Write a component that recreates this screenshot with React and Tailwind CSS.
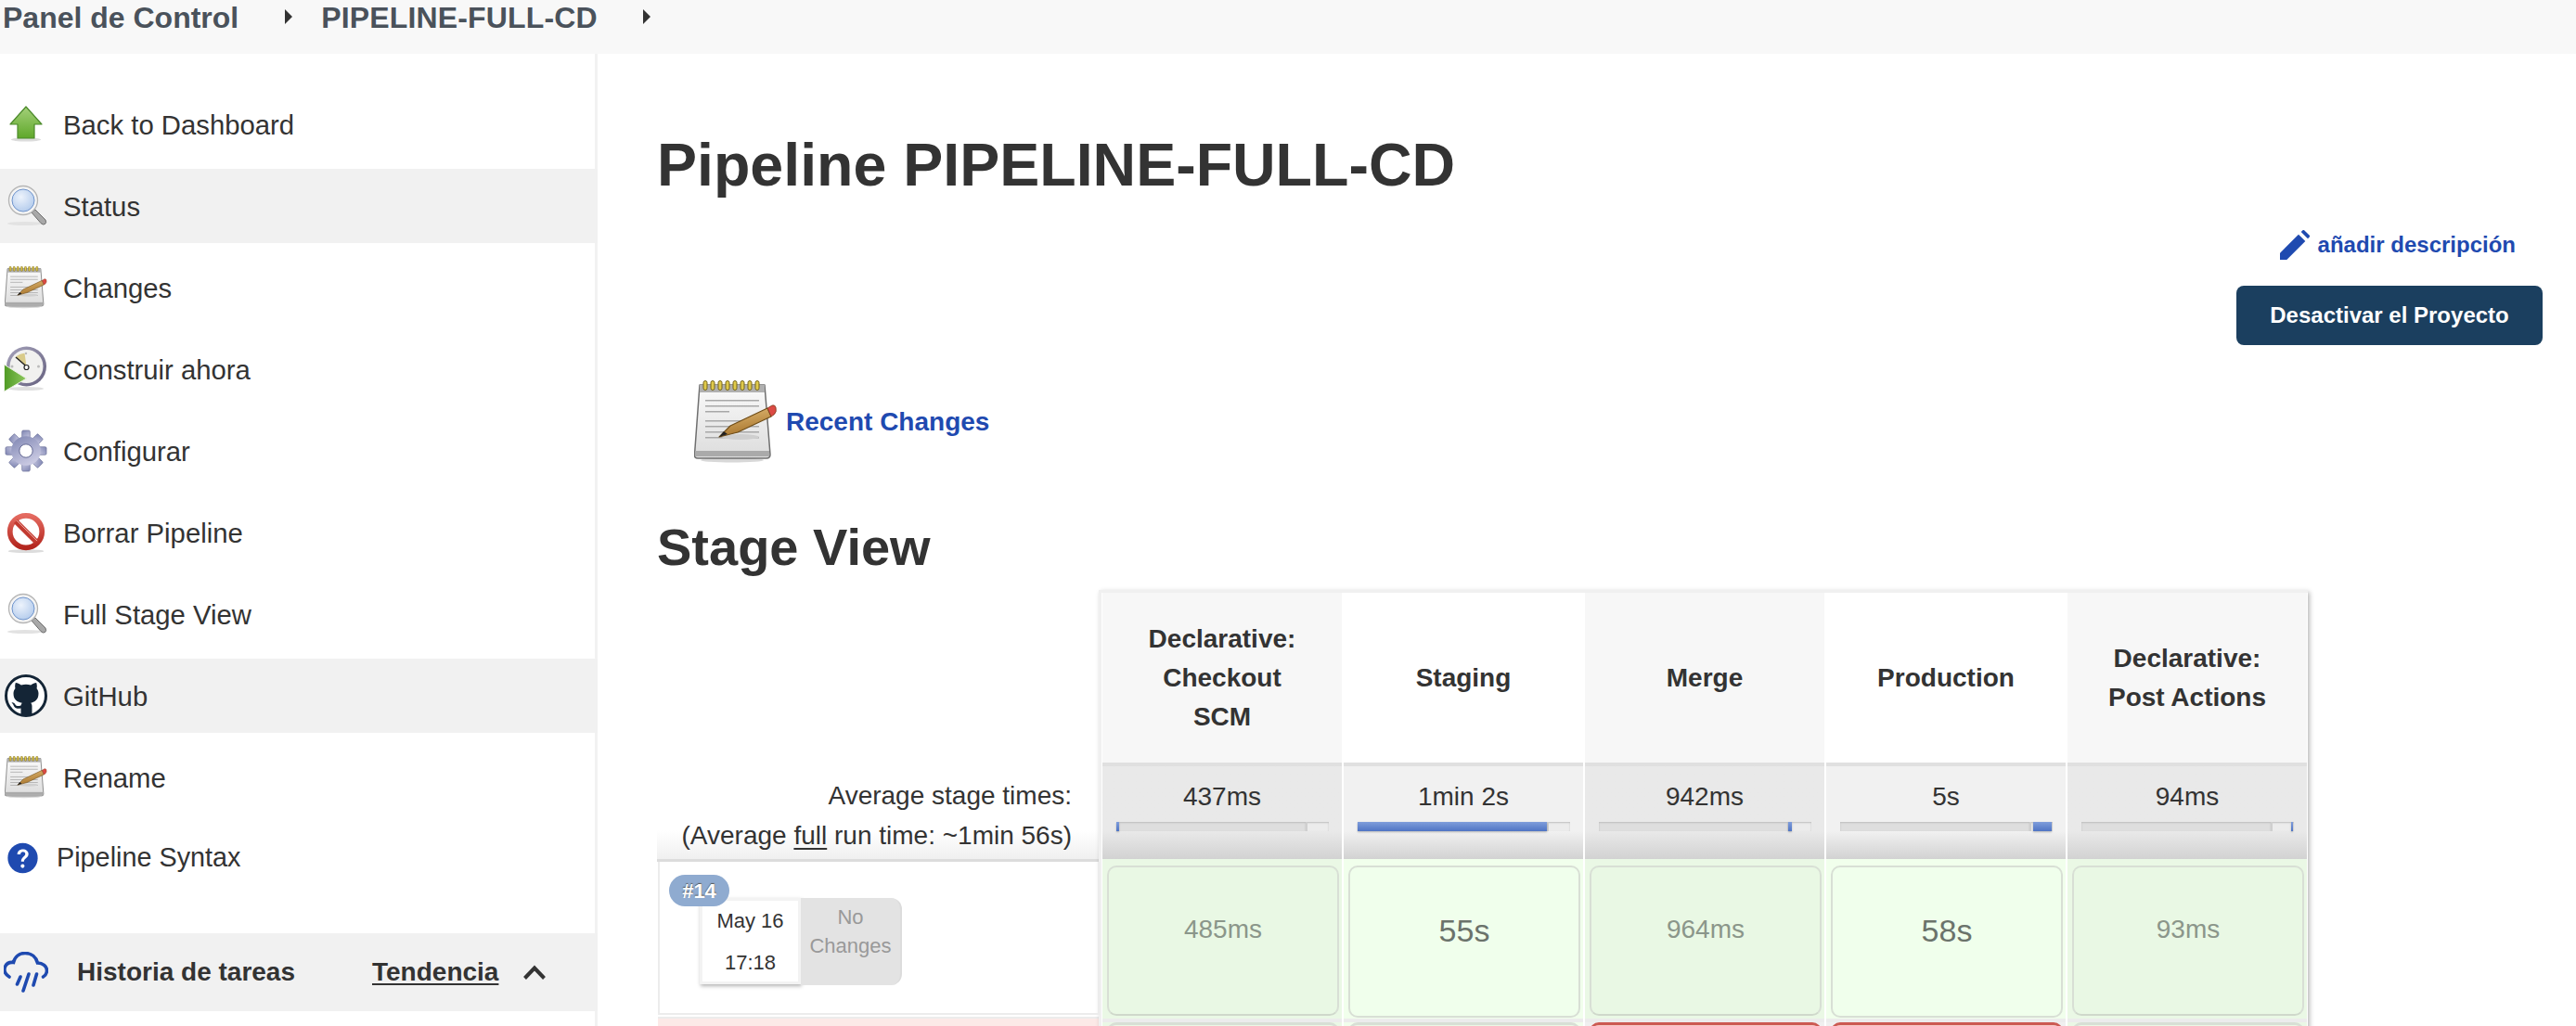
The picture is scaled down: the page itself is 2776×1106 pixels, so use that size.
import React from "react";

const F = "[font-family:'Liberation_Sans',Arial,sans-serif]";

function Notepad({ className }) {
  return (
    <svg viewBox="0 0 90 90" className={className}>
      <defs>
        <linearGradient id="npg" x1="0" y1="0" x2="0" y2="1">
          <stop offset="0" stopColor="#fafafa" />
          <stop offset="1" stopColor="#dcdcdc" />
        </linearGradient>
        <linearGradient id="pcg" x1="0" y1="0" x2="0.300" y2="1">
          <stop offset="0" stopColor="#e3bd78" />
          <stop offset="1" stopColor="#a8752d" />
        </linearGradient>
      </defs>
      <ellipse cx="41" cy="86" rx="34" ry="2.500" fill="#d8d8d8" />
      <path d="M6 5H76L82 80Q82 84 78 84H4Q0 84 0.500 80Z" fill="url(#npg)" stroke="#6f6f6f" strokeWidth="1.500" strokeLinejoin="round" />
      <rect x="6" y="5" width="70" height="8" fill="#b0b0b0" />
      <rect x="1" y="76" width="80" height="6" fill="#aaaaaa" />
      {[12, 20, 28, 36, 44, 52, 60, 68].map((x) => (
        <rect key={x} x={x - 2} y="0.500" width="4" height="10" rx="2" fill="#e0ca4a" stroke="#76651a" strokeWidth="1" />
      ))}
      {[21, 27, 33, 43, 49, 55, 61].map((y, i) => (
        <rect key={y} x="12" y={y} width={i === 2 ? 26 : 58} height="1.500" fill="#a8a8a8" />
      ))}
      <ellipse cx="50" cy="61" rx="20" ry="3" fill="#cfcfcf" />
      <path d="M27 61L39 49L79 30L83 39L47 56Z" fill="url(#pcg)" stroke="#6e4c17" strokeWidth="1.100" strokeLinejoin="round" />
      <path d="M27 61L32 55L36 58Z" fill="#222" />
      <path d="M79 30L84 27Q87 26 88 29Q89.500 34 86 37L83 39Z" fill="#dc4a44" stroke="#7c3a1a" strokeWidth="0.800" />
    </svg>
  );
}

function Magnifier({ id, className }) {
  return (
    <svg viewBox="0 0 48 48" className={className}>
      <defs>
        <radialGradient id={id} cx="0.400" cy="0.350" r="0.700">
          <stop offset="0" stopColor="#edf3fc" />
          <stop offset="1" stopColor="#b3cbec" />
        </radialGradient>
      </defs>
      <ellipse cx="23" cy="43" rx="19" ry="2" fill="#e2e2e2" />
      <path d="M30 31L34 28L45 39Q46.500 42 44.500 43.500Q42.500 45 40 42.500Z" fill="#a8a8a8" stroke="#6d6d6d" strokeWidth="1" />
      <circle cx="21" cy="18" r="15.500" fill="#f4f4f4" stroke="#b5b5b5" strokeWidth="1.300" />
      <circle cx="21" cy="18" r="12" fill={`url(#${id})`} stroke="#6f94cc" strokeWidth="1" />
    </svg>
  );
}

function Arrow({ className }) {
  return (
    <svg viewBox="0 0 48 48" className={className}>
      <defs>
        <linearGradient id="ag" x1="0" y1="0" x2="0" y2="1">
          <stop offset="0" stopColor="#a4d07a" />
          <stop offset="1" stopColor="#5fa82a" />
        </linearGradient>
      </defs>
      <ellipse cx="24" cy="40.500" rx="16" ry="2" fill="#dcdcdc" />
      <path d="M24 5L41 24H33V39H15V24H7Z" fill="url(#ag)" stroke="#4b8a2a" strokeWidth="1.200" strokeLinejoin="round" />
    </svg>
  );
}

function ClockPlay({ className }) {
  return (
    <svg viewBox="0 0 48 48" className={`${className} overflow-visible`}>
      <defs>
        <linearGradient id="pg" x1="0" y1="0" x2="1" y2="0">
          <stop offset="0" stopColor="#4f9a24" />
          <stop offset="1" stopColor="#8ec85e" />
        </linearGradient>
        <linearGradient id="cg" x1="0" y1="0" x2="1" y2="1">
          <stop offset="0" stopColor="#a6a3bb" />
          <stop offset="1" stopColor="#65607f" />
        </linearGradient>
      </defs>
      <ellipse cx="24" cy="45" rx="19" ry="2" fill="#e0e0e0" />
      <circle cx="24.500" cy="21" r="21.500" fill="url(#cg)" />
      <circle cx="24.500" cy="21" r="18" fill="#f1f1ef" />
      <path d="M24.500 21L13 11Q17 7 22.500 6.700Z" fill="#d9cb8a" />
      <path d="M24.500 21L13 11" stroke="#222" strokeWidth="1.500" />
      <circle cx="24.500" cy="22" r="2.500" fill="#fff" stroke="#222" strokeWidth="1.200" />
      <circle cx="24" cy="7" r="1.200" fill="#bbb" />
      <circle cx="37.500" cy="21" r="1.500" fill="#bbb" />
      <circle cx="9" cy="21" r="1.500" fill="#bbb" />
      <path d="M0.500 19L24.500 34L0.500 48Z" fill="url(#pg)" stroke="#e8f0df" strokeWidth="1" strokeLinejoin="round" />
    </svg>
  );
}

function Gear({ className }) {
  const teeth = [0, 45, 90, 135, 180, 225, 270, 315];
  return (
    <svg viewBox="0 0 48 48" className={className}>
      <defs>
        <linearGradient id="gg" x1="0" y1="0" x2="0.500" y2="1">
          <stop offset="0" stopColor="#7e85b2" />
          <stop offset="1" stopColor="#c9c9e2" />
        </linearGradient>
      </defs>
      <g fill="url(#gg)" stroke="#6a6f98" strokeWidth="0.700">
        {teeth.map((a) => (
          <rect key={a} x="19.500" y="1" width="9" height="12" rx="1.500" transform={`rotate(${a} 24 24)`} />
        ))}
      </g>
      <circle cx="24" cy="24" r="16.500" fill="url(#gg)" />
      <circle cx="24" cy="24" r="7.500" fill="#fff" stroke="#5f6490" strokeWidth="1" />
    </svg>
  );
}

function NoSign({ className }) {
  return (
    <svg viewBox="0 0 48 48" className={className}>
      <defs>
        <linearGradient id="ng" x1="0" y1="0" x2="0" y2="1">
          <stop offset="0" stopColor="#e46a60" />
          <stop offset="1" stopColor="#b3261e" />
        </linearGradient>
      </defs>
      <ellipse cx="24" cy="45" rx="20" ry="2" fill="#dcdcdc" />
      <circle cx="24" cy="23" r="18" fill="#fff" stroke="url(#ng)" strokeWidth="6" />
      <path d="M12.500 11.500L35.500 34.500" stroke="#c23a30" strokeWidth="6" />
      <path d="M13.500 10.500L36.500 33.500" stroke="#f3b5ae" strokeWidth="1" />
    </svg>
  );
}

function GitHubIcon({ className }) {
  return (
    <svg viewBox="0 0 48 48" className={className}>
      <circle cx="24" cy="24" r="21.500" fill="#fff" stroke="#142536" strokeWidth="3" />
      <path
        d="M18.500 44v-6.500c-5.500 1-7-1-8-3.500-.5-1.300-1.300-2-2-2.500 1.500-.5 3 .5 4 2 1 1.700 3 2 6 1 .2-1.300.7-2.200 1.300-2.800C14 30.500 10.500 28 10.500 21.500c0-2.300.8-4 2-5.500-.3-1-.7-3 .3-6 2 0 4 1 6 2.400 3.400-1 7-1 10.400 0 2-1.400 4-2.400 6-2.400 1 3 .6 5 .3 6 1.200 1.500 2 3.200 2 5.500 0 6.500-3.500 9-8.300 10.200.8.800 1.300 2 1.300 3.800V44z"
        fill="#142536"
      />
    </svg>
  );
}

function Help({ className }) {
  return (
    <svg viewBox="0 0 48 48" className={className}>
      <circle cx="24" cy="24" r="23.500" fill="#1f4ab0" />
      <path d="M15.500 18c0-5 3.800-8 8.700-8s8.800 3 8.800 7.500c0 6.500-7 6.500-7 12h-4.500c0-7.500 6.500-7.500 6.500-12 0-2-1.600-3.300-3.700-3.300s-3.800 1.500-3.800 3.800z" fill="#fff" />
      <circle cx="23.800" cy="36.500" r="3" fill="#fff" />
    </svg>
  );
}

function Rain({ className }) {
  return (
    <svg viewBox="0 0 48 44" className={className} fill="none" stroke="#1f4ab0" strokeWidth="3.600" strokeLinecap="round">
      <path d="M6 27C1 24 0 20 1.500 16C3 12.500 6 11 10.500 11.500C12 5 17 1.500 23 1.500C30 1.500 35 6 36.500 12C42 12 46.500 15.500 46.500 20C46.500 23 45 25.500 42.500 27" />
      <path d="M18 27L14.500 35M27 24L21 42M35.500 24L32 36" />
    </svg>
  );
}

function Pencil({ className }) {
  return (
    <svg viewBox="0 0 24 24" className={className} fill="#1f4ab0">
      <path d="M0 24V18.500L15 3.500L20.500 9L5.500 24Z" />
      <path d="M17 1.500L18.200 0.300A1.200 1.200 0 0 1 19.800 0.300L23.700 4.200A1.200 1.200 0 0 1 23.700 5.800L22.500 7Z" />
    </svg>
  );
}

const items = [
  { label: "Back to Dashboard", icon: <Arrow className="w-[48px] h-[48px]" />, mt: "mt-[36px]" },
  { label: "Status", icon: <Magnifier id="m1" className="w-[48px] h-[48px]" />, active: true },
  { label: "Changes", icon: <Notepad className="w-[46px] h-[46px]" /> },
  { label: "Construir ahora", icon: <ClockPlay className="w-[48px] h-[48px]" /> },
  { label: "Configurar", icon: <Gear className="w-[46px] h-[46px]" /> },
  { label: "Borrar Pipeline", icon: <NoSign className="w-[46px] h-[46px]" /> },
  { label: "Full Stage View", icon: <Magnifier id="m2" className="w-[48px] h-[48px]" /> },
  { label: "GitHub", icon: <GitHubIcon className="w-[48px] h-[48px]" />, active: true },
  { label: "Rename", icon: <Notepad className="w-[46px] h-[46px]" /> },
];

const stages = [
  { h: ["Declarative:", "Checkout", "SCM"], avg: "437ms", fillL: 0, fillW: 1.5, v: "485ms" },
  { h: ["Staging"], avg: "1min 2s", fillL: 0, fillW: 89.5, v: "55s", big: true },
  { h: ["Merge"], avg: "942ms", fillL: 89.5, fillW: 1.5, v: "964ms" },
  { h: ["Production"], avg: "5s", fillL: 91, fillW: 9, v: "58s", big: true },
  { h: ["Declarative:", "Post Actions"], avg: "94ms", fillL: 99, fillW: 1, v: "93ms" },
];

function Caret({ className }) {
  return <span className={`w-0 h-0 border-y-[8px] border-y-transparent border-l-[8px] border-l-[#333] ${className}`} />;
}

export default function App() {
  return (
    <div className={`${F} w-[2776px] h-[1106px] overflow-hidden bg-white text-[#333] text-[28px]`}>
      <header className="h-[58px] bg-[#f8f8f8] flex items-start text-[#4a525b] text-[32px] font-bold leading-[38px] pl-[3px]">
        <span>Panel de Control</span>
        <Caret className="ml-[50px] mt-[10px]" />
        <span className="ml-[31px] tracking-[0.15px]">PIPELINE-FULL-CD</span>
        <Caret className="ml-[49px] mt-[10px]" />
      </header>

      <div className="flex h-[1048px]">
        <aside className="w-[644px] shrink-0 border-r-[3px] border-[#f2f2f2]">
          {items.map((it) => (
            <div
              key={it.label}
              className={`h-[80px] mb-[8px] -mr-[3px] flex items-center ${it.mt || ""} ${it.active ? "bg-[#f1f1f1]" : ""}`}
            >
              <span className="w-[68px] shrink-0 flex justify-center pr-[13px]">{it.icon}</span>
              <span className="leading-none text-[29.3px] pt-[1px]">{it.label}</span>
            </div>
          ))}
          <div className="h-[46px] mt-[24px] flex items-center pl-[8px]">
            <Help className="w-[33px] h-[34px]" />
            <span className="ml-[20px] text-[28.8px]">Pipeline Syntax</span>
          </div>
          <div className="mt-[58px] -mr-[3px] h-[84px] bg-[#f1f1f1] flex items-center pl-[4px]">
            <Rain className="w-[48px] h-[44px] shrink-0" />
            <span className="ml-[31px] font-bold">Historia de tareas</span>
            <span className="ml-[83px] font-bold underline underline-offset-[3px]">Tendencia</span>
            <svg viewBox="0 0 24 16" className="ml-[27px] w-[24px] h-[16px]" fill="none" stroke="#333" strokeWidth="4">
              <path d="M1.500 14.500L12 3.500L22.500 14.500" />
            </svg>
          </div>
        </aside>

        <main className="flex-1 min-w-0 pl-[64px] flex flex-col">
          <h1 className="text-[64.5px] font-bold leading-[74px] mt-[83px]">Pipeline PIPELINE-FULL-CD</h1>

          <div className="flex justify-end items-center mr-[65px] mt-[31px] h-[36px] text-[24px] font-bold text-[#1f4ab0]">
            <Pencil className="w-[32px] h-[32px] mr-[9px]" />
            <span>añadir descripción</span>
          </div>
          <div className="flex justify-end mr-[36px] mt-[26px]">
            <button className="w-[330px] h-[64px] rounded-[8px] bg-[#1b3f5f] text-white text-[24px] font-bold">
              Desactivar el Proyecto
            </button>
          </div>

          <div className="flex items-center ml-[40px] mt-[38px] h-[90px]">
            <Notepad className="w-[90px] h-[90px] shrink-0" />
            <span className="ml-[9px] -mt-[1px] font-bold text-[#1f4ab0]">Recent Changes</span>
          </div>

          <h2 className="text-[56px] font-bold leading-[64px] mt-[58px]">Stage View</h2>

          <section className="flex mt-[14px]">
            <div className="w-[477px] shrink-0 flex flex-col">
              <div className="h-[186px]" />
              <div className="h-[107px] flex flex-col justify-center items-end pr-[30px] leading-[43px] pt-[9px] bg-gradient-to-b from-white from-70% to-[#f0f0f0] border-b-[3px] border-[#dcdcdc]">
                <span>Average stage times:</span>
                <span>
                  (Average <span className="underline underline-offset-[4px]">full</span> run time: ~1min 56s)
                </span>
              </div>
              <div className="h-[165px] relative border-x-2 border-b-2 border-[#ececec] ml-[1px]">
                <span className="absolute left-[10px] top-[14px] z-10 w-[65px] h-[34px] rounded-[17px] bg-[#8fabd0] text-white text-[22px] font-bold flex items-center justify-center [text-shadow:0_-1px_1px_#555]">
                  #14
                </span>
                <div className="absolute left-[43px] top-[39px] flex">
                  <div className="w-[109px] h-[93px] bg-white border-[3px] border-[#f3f3f3] shadow-[1px_2px_4px_rgba(0,0,0,0.3)] text-[22px] text-center flex flex-col justify-center leading-[45px] text-[#333]">
                    <span>May 16</span>
                    <span>17:18</span>
                  </div>
                  <div className="w-[109px] h-[94px] bg-[#e3e3e3] rounded-r-[12px] border-r-2 border-[#dcdcdc] text-[22px] text-[#999] text-center leading-[31px] pt-[5px]">
                    <div>No</div>
                    <div>Changes</div>
                  </div>
                </div>
              </div>
              <div className="mt-[2px] ml-[1px] h-[20px] bg-[#fce9e7] border-t-2 border-[#ececec]" />
            </div>

            <div className="w-[1303px] shrink-0 flex border-t-[3px] border-l-[3px] border-[#f0f0f0] shadow-[2px_2px_5px_rgba(0,0,0,0.28)] self-start -ml-[1px]">
              {stages.map((s, i) => {
                const odd = i % 2 === 0;
                const red = i === 2 || i === 3;
                const rowBg = odd ? "bg-[#eaf8e5]" : "bg-[#f1ffec]";
                return (
                  <div key={i} className="w-[260px] flex flex-col border-x border-white">
                    <div className={`h-[183px] flex flex-col items-center justify-center font-bold leading-[42px] ${odd ? "bg-[#f7f7f7]" : "bg-white"}`}>
                      {s.h.map((l) => (
                        <span key={l}>{l}</span>
                      ))}
                    </div>
                    <div className={`h-[104px] border-t-[4px] border-[#e0e0e0] pt-[17px] flex flex-col items-center bg-gradient-to-b from-70% to-[#d2d2d2] ${odd ? "from-[#e9e9e9]" : "from-[#f1f1f1]"}`}>
                      <span className="leading-[32px]">{s.avg}</span>
                      <div className="relative w-[229px] h-[10px] mt-[11px] flex bg-[#ececec] shadow-[inset_0_1px_2px_rgba(0,0,0,0.2)]">
                        <div className="w-[90%] h-full bg-[#dedede] border-r-2 border-[#cfcfcf] shadow-[inset_0_1px_2px_rgba(0,0,0,0.15)]" />
                        <div
                          className="absolute top-0 h-full bg-gradient-to-b from-[#7f9ddb] to-[#4f74c4] shadow-[0_1px_2px_rgba(0,0,0,0.25)]"
                          style={{ left: `${s.fillL}%`, width: `${s.fillW}%` }}
                        />
                      </div>
                    </div>
                    <div className={`h-[172px] pl-[5px] pr-[3px] pt-[7px] ${rowBg}`}>
                      <div
                        className={`rounded-[10px] border-2 border-[#d8dfd5] flex items-center justify-center pb-[24px] ${odd ? "h-[162px] border-b-[#cfd8cb] bg-[#e9f8e4] text-[28px] text-[#8b968a]" : "h-[164px] bg-[#f0ffec] text-[34px] text-[#6b736b]"}`}
                      >
                        {s.v}
                      </div>
                    </div>
                    <div className="h-[4px] bg-[#ececec]" />
                    <div className={`h-[20px] pl-[5px] pr-[3px] ${red ? "bg-[#f0f0f0]" : rowBg}`}>
                      <div
                        className={`h-[20px] rounded-t-[10px] border-x-2 border-t-[3px] ${red ? "bg-[#f5c9c4] border-[#cc5a52]" : "bg-[#eaf8e5] border-[#d8dfd5]"}`}
                      />
                    </div>
                  </div>
                );
              })}
            </div>
          </section>
        </main>
      </div>
    </div>
  );
}
